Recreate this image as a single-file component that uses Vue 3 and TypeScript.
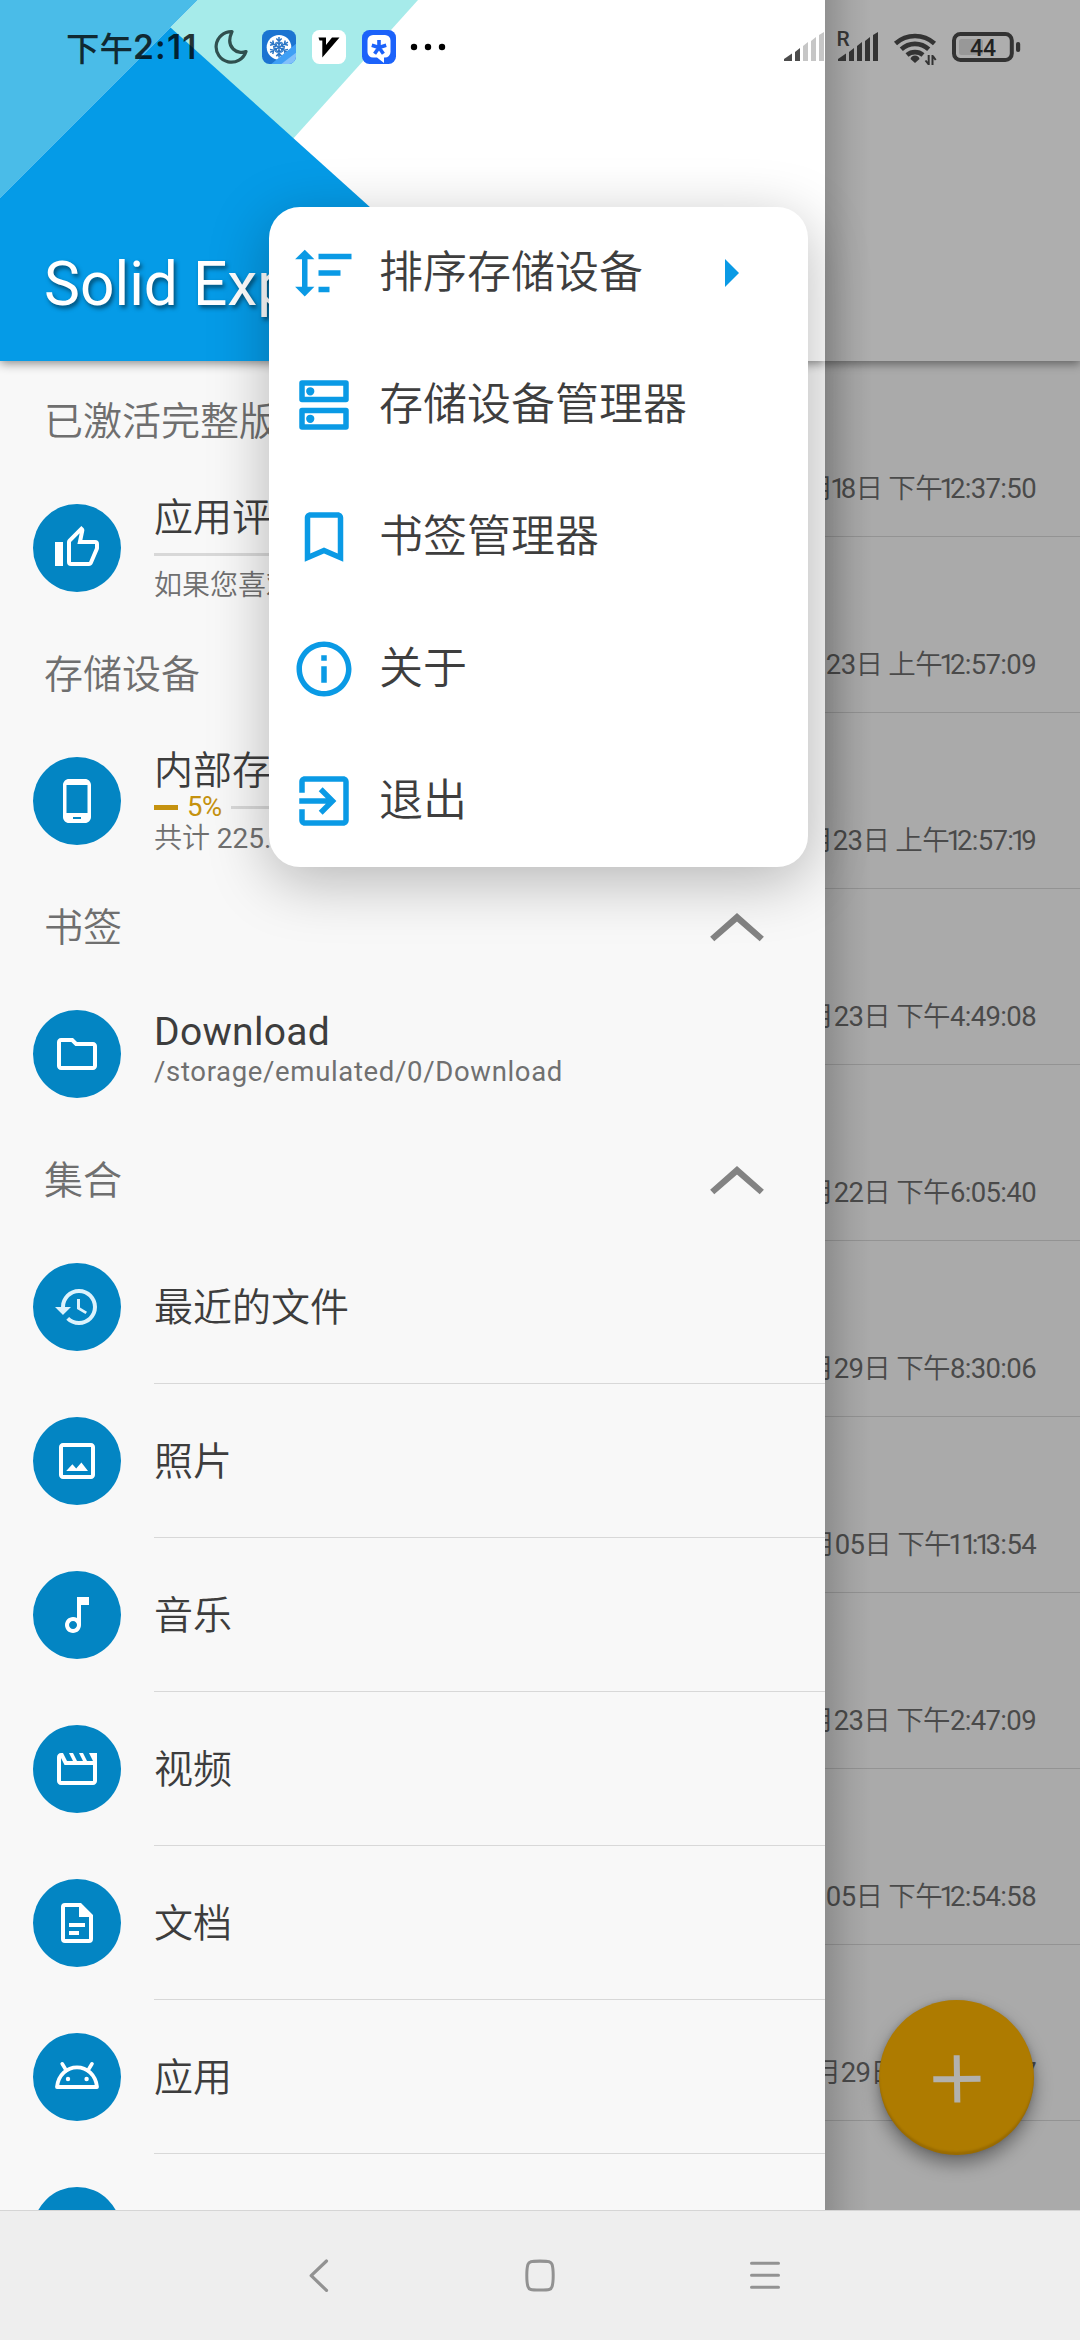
<script setup lang="ts">
interface DrawerItem {
  icon: string
  label: string
  sub?: string
  percent?: string
  bar?: boolean
}
interface Section {
  title: string
  collapsible: boolean
  divided: boolean
  items: DrawerItem[]
}

const icons: Record<string, string> = {
  thumb:
    'M5 9v12H1V9h4m4 12a2 2 0 0 1-2-2V9c0-.55.22-1.05.59-1.41L14.17 1l1.06 1.06c.27.27.44.64.44 1.05l-.03.32L14.69 8H21a2 2 0 0 1 2 2v2c0 .26-.05.5-.14.73l-3.02 7.05C19.54 20.5 18.83 21 18 21H9m0-2h9.03L21 12v-2h-8.79l1.13-5.32L9 9.03V19z',
  phone:
    'M16 1H8C6.34 1 5 2.34 5 4v16c0 1.66 1.34 3 3 3h8c1.66 0 3-1.34 3-3V4c0-1.66-1.34-3-3-3zm-2 20h-4v-1h4v1zm3.25-3H6.75V4h10.5v14z',
  folder:
    'M9.17 6l2 2H20v10H4V6h5.17M10 4H4c-1.1 0-1.99.9-1.99 2L2 18c0 1.1.9 2 2 2h16c1.1 0 2-.9 2-2V8c0-1.1-.9-2-2-2h-8l-2-2z',
  history:
    'M13 3c-4.97 0-9 4.03-9 9H1l3.89 3.89.07.14L9 12H6c0-3.87 3.13-7 7-7s7 3.13 7 7-3.13 7-7 7c-1.93 0-3.68-.79-4.94-2.06l-1.42 1.42C8.27 19.99 10.51 21 13 21c4.97 0 9-4.03 9-9s-4.03-9-9-9zm-1 5v5l4.28 2.54.72-1.21-3.5-2.08V8H12z',
  image:
    'M19 5v14H5V5h14m0-2H5c-1.1 0-2 .9-2 2v14c0 1.1.9 2 2 2h14c1.1 0 2-.9 2-2V5c0-1.1-.9-2-2-2zM6.6 17l3.1-3.4 1.9 2.1 2.6-3L17.5 17z',
  music:
    'M12 3l.01 10.55c-.59-.34-1.27-.55-2-.55C7.79 13 6 14.79 6 17s1.79 4 4.01 4S14 19.21 14 17V7h4V3h-6zm-1.99 16c-1.1 0-2-.9-2-2s.9-2 2-2 2 .9 2 2-.9 2-2 2z',
  movie:
    'M4 6.47L5.76 10H20v8H4V6.47M22 4h-4l2 4h-3l-2-4h-2l2 4h-3l-2-4H8l2 4H7L5 4H4c-1.1 0-1.99.9-1.99 2L2 18c0 1.1.9 2 2 2h16c1.1 0 2-.9 2-2V4z',
  doc:
    'M6 2a2 2 0 0 0-2 2v16a2 2 0 0 0 2 2h12a2 2 0 0 0 2-2V8l-6-6H6m0 2h7v5h5v11H6V4m2 8v2h8v-2H8m0 4v2h5v-2H8z',
}

const sections: Section[] = [
  { title: '已激活完整版', collapsible: false, divided: false, items: [{ icon: 'thumb', label: '应用评分', sub: '如果您喜欢', bar: true }] },
  { title: '存储设备', collapsible: false, divided: false, items: [{ icon: 'phone', label: '内部存储', sub: '共计 225.', percent: '5%', bar: true }] },
  { title: '书签', collapsible: true, divided: false, items: [{ icon: 'folder', label: 'Download', sub: '/storage/emulated/0/Download' }] },
  {
    title: '集合',
    collapsible: true,
    divided: true,
    items: [
      { icon: 'history', label: '最近的文件' },
      { icon: 'image', label: '照片' },
      { icon: 'music', label: '音乐' },
      { icon: 'movie', label: '视频' },
      { icon: 'doc', label: '文档' },
      { icon: 'android', label: '应用' },
      { icon: '', label: '' },
    ],
  },
]

const rows: string[] = [
  '月18日 下午12:37:50',
  '月23日 上午12:57:09',
  '月23日 上午12:57:19',
  '月23日 下午4:49:08',
  '月22日 下午6:05:40',
  '月29日 下午8:30:06',
  '月05日 下午11:13:54',
  '月23日 下午2:47:09',
  '月05日 下午12:54:58',
  '月29日 下午1:20:37',
]

// Figures are set in a heavier cut than the Chinese text, and the digit one is set tighter.
const split = (text: string): string[] => text.split(/(1+|[02-9:.]+)/).filter((part) => part !== '')
const isFigure = (part: string): boolean => /^[0-9:.]+$/.test(part)

const menu = [
  { id: 'sort', label: '排序存储设备', more: true, path: 'M6 7h2.5L5 3.5 1.5 7H4v10H1.5L5 20.5 8.5 17H6V7zM10 5h12v2H10zM10 11h8v2h-8zM10 17h4v2h-4z' },
  { id: 'storage', label: '存储设备管理器', more: false, path: 'M4 3h16a1 1 0 0 1 1 1v6a1 1 0 0 1-1 1H4a1 1 0 0 1-1-1V4a1 1 0 0 1 1-1zm1 2v4h14V5zM4 13h16a1 1 0 0 1 1 1v6a1 1 0 0 1-1 1H4a1 1 0 0 1-1-1v-6a1 1 0 0 1 1-1zm1 2v4h14v-4zM5.5 7a1.5 1.5 0 1 0 3 0a1.5 1.5 0 1 0-3 0zM5.5 17a1.5 1.5 0 1 0 3 0a1.5 1.5 0 1 0-3 0z' },
  { id: 'bookmark', label: '书签管理器', more: false, path: 'M17 3H7c-1.1 0-2 .9-2 2v16l7-3 7 3V5c0-1.1-.9-2-2-2zm0 15l-5-2.18L7 18V5h10v13z' },
  { id: 'about', label: '关于', more: false, path: 'M11 7h2v2h-2zm0 4h2v6h-2zm1-9C6.48 2 2 6.48 2 12s4.48 10 10 10 10-4.48 10-10S17.52 2 12 2zm0 18c-4.41 0-8-3.59-8-8s3.59-8 8-8 8 3.59 8 8-3.59 8-8 8z' },
  { id: 'exit', label: '退出', more: false, path: 'M10.09 15.59L11.5 17l5-5-5-5-1.41 1.41L12.67 11H3v2h9.67l-2.58 2.59zM19 3H5c-1.11 0-2 .9-2 2v4h2V5h14v14H5v-4H3v4c0 1.1.89 2 2 2h14c1.1 0 2-.9 2-2V5c0-1.1-.9-2-2-2z' },
]
</script>

<template>
  <div class="screen">
    <main class="files">
      <div class="files-head"></div>
      <div v-for="(r, i) in rows" :key="i" class="file">
        <span class="date"><span v-for="(p, j) in split(r)" :key="j" :class="{ fig: isFigure(p), one: p[0] === '1' }">{{ p }}</span></span>
      </div>
      <button class="fab" aria-label="+">
        <svg width="48" height="48" viewBox="0 0 48 48"><path d="M24 .3v47.2M.3 24h47.2" stroke="#b2b1ae" stroke-width="6" transform="rotate(-.8 24 24)" /></svg>
      </button>
    </main>

    <aside class="drawer">
      <header class="drawer-head">
        <svg class="art" width="825" height="361" viewBox="0 0 825 361">
          <rect width="825" height="361" fill="#fff" />
          <path d="M0 0H198L0 198z" fill="#4abce8" />
          <path d="M198 0H418L292 140 170 28z" fill="#a6ebea" />
          <path d="M170.500 27.500L0 198V361H541z" fill="#059be7" />
        </svg>
        <span class="app-name">Solid Explorer</span>
      </header>
      <div class="drawer-list">
        <section v-for="s in sections" :key="s.title">
          <div class="section-head">
            <span>{{ s.title }}</span>
            <svg v-if="s.collapsible" width="56" height="32" viewBox="0 0 56 32"><path d="M3.200 27L28 5.300 52.800 27" fill="none" stroke="#838383" stroke-width="6.300" /></svg>
          </div>
          <div v-for="(it, i) in s.items" :key="i" class="item">
            <span class="disc">
              <svg v-if="it.icon === 'android'" width="48" height="48" viewBox="0 0 24 24">
                <path d="M2 17C2.600 11 7 7.200 12 7.200S21.400 11 22 17z" fill="none" stroke="#fff" stroke-width="1.900" stroke-linejoin="round" />
                <path d="M4.600 5.400L6.600 8.700M19.500 5.400L17.500 8.700" stroke="#fff" stroke-width="1.800" stroke-linecap="round" />
                <circle cx="7.500" cy="13" r="1.100" fill="#fff" /><circle cx="16.800" cy="13" r="1.100" fill="#fff" />
              </svg>
              <svg v-else-if="it.icon" width="48" height="48" viewBox="0 0 24 24"><path :d="icons[it.icon]" :class="{ pale: it.icon === 'history' }" fill="#fff" fill-rule="evenodd" /></svg>
            </span>
            <div class="body" :class="{ lined: s.divided, stacked: it.bar, pair: it.sub && !it.bar }">
              <span class="label">{{ it.label }}</span>
              <div v-if="it.bar" class="usage">
                <template v-if="it.percent"><i class="used"></i><b>{{ it.percent }}</b></template>
                <i class="rest"></i>
              </div>
              <span v-if="it.sub" class="sub"><span v-for="(p, j) in split(it.sub)" :key="j" :class="{ fig: isFigure(p) }">{{ p }}</span></span>
            </div>
          </div>
        </section>
      </div>
    </aside>

    <nav class="nav">
      <svg width="34" height="40" viewBox="0 0 34 40"><path d="M28.500 5L13.200 19.700 28.500 34.400" fill="none" stroke="#929292" stroke-width="3.200" stroke-linecap="round" stroke-linejoin="round" /></svg>
      <svg width="40" height="40" viewBox="0 0 40 40"><path d="M20 5.200C30 5.200 32 5.400 33 8.600c1.600 5 1.600 17 0 22-1 3.200-3 3.400-13 3.400S8 33.800 7 30.600c-1.600-5-1.600-17 0-22 1-3.200 3-3.400 13-3.400z" transform="translate(1.400 0) scale(.93 1)" fill="none" stroke="#929292" stroke-width="3.200" /></svg>
      <svg width="34" height="40" viewBox="0 0 34 40"><path d="M3.500 7.300h27M3.500 19.300h27M3.500 31.300h27" stroke="#929292" stroke-width="3" stroke-linecap="round" /></svg>
    </nav>

    <div class="status">
      <span class="clock">下午<span>2:11</span></span>
      <svg class="moon" width="34" height="36" viewBox="0 0 34 36"><path d="M18 2.600A15.300 15.300 0 1 0 32 22.500C24 26 10.500 19 18 2.600z" fill="none" stroke="#30504f" stroke-width="3.200" stroke-linejoin="round" /></svg>
      <svg class="app" width="34" height="34" viewBox="0 0 34 34">
        <defs><clipPath id="round"><rect width="34" height="34" rx="7.500" /></clipPath></defs>
        <g clip-path="url(#round)">
          <rect width="34" height="34" fill="#1b74d1" />
          <circle cx="17" cy="17.300" r="12.300" fill="#fff" />
          <g stroke="#2a76c6" stroke-width="1.500" fill="none">
            <g v-for="a in 6" :key="a" :transform="`rotate(${a * 60} 17 17.300)`"><path d="M17 17.300V7M14.300 8.500l2.700 2.700 2.700-2.700M14.500 12l2.500 2.500 2.500-2.500" /></g>
          </g>
          <path d="M8 35L35 13V35z" fill="#3f9ff5" /><path d="M18 35L35 22V35z" fill="#82c0fa" />
        </g>
      </svg>
      <svg class="app" width="34" height="34" viewBox="0 0 34 34"><rect width="34" height="34" rx="7.500" fill="#fff" /><path d="M6.500 7.500H14V15L20 7.500H27.500L10.300 27.500V10.500H7.500z" fill="#000" /></svg>
      <svg class="app" width="34" height="34" viewBox="0 0 34 34"><rect width="34" height="34" rx="7.500" fill="#1c62fa" /><path d="M11 5H23a5.500 5.500 0 0 1 5.500 5.500V22a5.500 5.500 0 0 1-5.500 5.500H22V33L15 27.500H11A5.500 5.500 0 0 1 5.500 22V10.500A5.500 5.500 0 0 1 11 5z" fill="#fff" /><path d="M17 17.500V10M17 17.500L9.800 15.300M17 17.500L24.200 15.300M17 17.500L12.600 23.800M17 17.500L21.400 23.800" stroke="#1c62fa" stroke-width="3.600" /></svg>
      <svg class="dots" width="36" height="8" viewBox="0 0 36 8"><circle cx="4" cy="4" r="3.200" /><circle cx="18" cy="4" r="3.200" /><circle cx="32" cy="4" r="3.200" /></svg>
      <svg class="system" width="240" height="40" viewBox="784 27 240 40">
        <g fill="#4d4d4d">
          <path d="M784 61v-2l8-5.500V61z" /><path d="M795 61V52l5-4V61z" />
          <g fill="#c6c6c6"><path d="M803 61V46l5-4V61z" /><path d="M811 61V41l5-4V61z" /><path d="M819 61V35l5-3V61z" /></g>
        </g>
        <g fill="#333">
          <path d="M838 61v-2l8-5.500V61z" /><path d="M849 61V52l5-4V61z" /><path d="M857 61V46l5-4V61z" /><path d="M865 61V41l5-4V61z" /><path d="M873 61V35l5-3V61z" />
        </g>
        <text x="836.500" y="46" class="roam">R</text>
        <g fill="none" stroke="#333" stroke-width="4.600">
          <path d="M895.500 43.500A29 29 0 0 1 934.500 43.500" /><path d="M901.300 49.300A20 20 0 0 1 928.700 49.300" /><path d="M907 55A12.500 12.500 0 0 1 923 55" />
        </g>
        <path d="M915 55.500a5 4.500 0 0 1 4.500 3.500L915 63l-4.500-4A5 4.500 0 0 1 915 55.500z" fill="#333" />
        <path d="M928.700 65V55M925.500 60.500l3.200 4M932.500 55V65M932.500 55.500l3.200 4.500" fill="none" stroke="#333" stroke-width="2" />
        <rect x="959" y="39" width="24" height="16" rx="2.500" fill="#989898" />
        <rect x="954" y="34" width="57.800" height="26" rx="6.500" fill="none" stroke="#333" stroke-width="4" />
        <rect x="1016" y="42" width="4.200" height="10" rx="2" fill="#333" />
        <text x="983" y="55.600" text-anchor="middle" class="level">44</text>
      </svg>
    </div>

    <div class="menu">
      <div v-for="m in menu" :key="m.id" class="menu-item">
        <svg width="66" height="66" viewBox="0 0 24 24"><path :d="m.path" fill="#0a9ae5" fill-rule="evenodd" /></svg>
        <span>{{ m.label }}</span>
        <svg v-if="m.more" class="more" width="14" height="28" viewBox="0 0 14 28"><path d="M0 0L14 14 0 28z" fill="#0a9ae5" /></svg>
      </div>
    </div>
  </div>
</template>

<style>
body { margin: 0; }
</style>

<style scoped>
.screen {
  position: relative;
  width: 1080px;
  height: 2340px;
  overflow: hidden;
  display: flex;
  flex-direction: column;
  font-family: Roboto, "Noto Sans CJK SC DemiLight", "Noto Sans CJK SC", sans-serif;
  font-weight: 350;
}
.files {
  position: relative;
  height: 2210px;
  overflow: hidden;
  background: #aaaaaa;
}
.files-head {
  position: relative;
  height: 361px;
  background: #aeaeae;
  box-shadow: 0 3px 9px rgba(0, 0, 0, .42);
}
.file {
  display: flex;
  justify-content: flex-end;
  align-items: flex-end;
  box-sizing: border-box;
  height: 176px;
  padding: 0 44px 27px 0;
  border-bottom: 1px solid #939393;
  font-size: 27.5px;
  line-height: 40px;
  letter-spacing: -.65px;
  color: #4a4a4a;
}
.date { white-space: nowrap; }
.fig { font-weight: 400; }
.one { margin: 0 -2.5px; letter-spacing: -2.6px; }
.fab {
  position: absolute;
  left: 879px;
  top: 2000px;
  width: 155px;
  height: 155px;
  display: grid;
  place-items: center;
  padding: 2px 0 0;
  border: 0;
  border-radius: 50%;
  background: #ae7b00;
  box-shadow: 0 9px 18px rgba(0, 0, 0, .38), 0 0 5px rgba(0, 0, 0, .14), inset 0 -3px 2px rgba(90, 60, 0, .25);
}
.drawer {
  position: absolute;
  left: 0;
  top: 0;
  width: 825px;
  height: 2210px;
  overflow: hidden;
  background: #f8f8f8;
}
.files::after {
  content: "";
  position: absolute;
  left: 825px;
  top: 0;
  width: 46px;
  height: 2210px;
  background: linear-gradient(90deg, rgba(0, 0, 0, .17), rgba(0, 0, 0, .05) 55%, transparent);
}
.drawer-head {
  position: relative;
  display: flex;
  align-items: flex-end;
  height: 361px;
  box-shadow: 0 2px 10px rgba(0, 0, 0, .48);
}
.art { position: absolute; inset: 0; }
.app-name {
  position: relative;
  margin: 0 0 40px 44px;
  font-size: 60.5px;
  line-height: 72px;
  font-weight: 400;
  color: #fff;
  text-shadow: 2px 3px 4px rgba(0, 0, 0, .5);
}
.drawer-list { padding-top: 11px; }
.section-head {
  display: flex;
  align-items: center;
  justify-content: space-between;
  height: 99px;
  padding: 0 60px 0 44px;
  font-size: 39px;
  line-height: 46px;
  color: #6f6f6f;
}
.item {
  display: flex;
  align-items: center;
  height: 154px;
  padding-left: 33px;
}
.disc {
  display: grid;
  place-items: center;
  width: 88px;
  height: 88px;
  border-radius: 50%;
  background: #0385c3;
}
.pale { fill: #dcf2fc; }
.body {
  flex: 1;
  display: flex;
  flex-direction: column;
  justify-content: center;
  box-sizing: border-box;
  height: 154px;
  margin-left: 33px;
}
.lined { border-bottom: 1px solid #d8d8d8; padding-top: 2px; }
.label {
  font-size: 39px;
  line-height: 46px;
  color: #3d3d3d;
}
.sub {
  font-size: 28px;
  line-height: 34px;
  color: #707070;
}
.pair { padding-bottom: 11px; font-weight: 400; }
.pair .label { letter-spacing: .3px; }
.pair .sub { font-size: 27.5px; letter-spacing: .67px; }
.stacked { justify-content: flex-start; padding-top: 24px; }
.stacked .label { margin-bottom: -1px; }
.stacked .sub { margin-top: 1px; }
.usage {
  display: flex;
  align-items: center;
  gap: 9px;
  height: 28px;
  margin-right: 44px;
}
.usage b { font-size: 27.5px; font-weight: 400; line-height: 28px; letter-spacing: -.5px; color: #c5920f; }
.used { width: 24px; height: 5px; background: #c5920f; }
.rest { flex: 1; height: 3px; background: #d8d8d8; }
.nav {
  display: flex;
  align-items: center;
  justify-content: center;
  gap: 188px;
  box-sizing: border-box;
  height: 130px;
  border-top: 1px solid #d5d5d5;
  background: #eeeeee;
}
.status {
  position: absolute;
  left: 66px;
  top: 27px;
  width: 958px;
  height: 40px;
  display: flex;
  align-items: center;
}
.clock {
  display: flex;
  align-items: center;
  width: 130px;
  font-family: "Noto Sans CJK SC", sans-serif;
  font-size: 33.5px;
  font-weight: 500;
  line-height: 40px;
  color: rgba(0, 0, 0, .78);
  white-space: nowrap;
}
.clock span { font-family: Inter, sans-serif; font-weight: 600; letter-spacing: 1.2px; }
.moon { margin: 0 14px 0 18px; }
.app { margin-right: 16px; }
.dots { margin-left: -2px; }
.system { margin-left: auto; }
.roam { font: 500 21px Roboto, sans-serif; fill: #333; }
.level { font: 500 23px Roboto, sans-serif; fill: #222; }
.menu {
  position: absolute;
  left: 269px;
  top: 207px;
  width: 539px;
  height: 660px;
  border-radius: 31px;
  background: #fff;
  box-shadow: 0 14px 60px rgba(0, 0, 0, .27);
}
.menu-item {
  display: flex;
  align-items: center;
  height: 132px;
  padding: 0 69px 0 22px;
  font-size: 44px;
  line-height: 60px;
  color: #3e3e3e;
}
.menu-item span { margin-left: 22px; }
.more { margin-left: auto; }
</style>
